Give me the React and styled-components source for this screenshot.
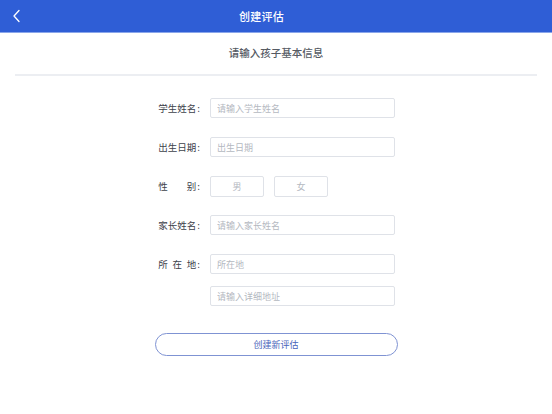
import styled, { createGlobalStyle } from "styled-components";

const GlobalStyle = createGlobalStyle`
  html, body {
    margin: 0;
    padding: 0;
    background: #ffffff;
  }
  body {
    font-family: "Noto Sans CJK SC", "Noto Sans", sans-serif;
  }
`;

const BackIcon = () => (
  <svg width="10" height="14" viewBox="0 0 10 14" fill="none">
    <path d="M7 1.5L2 7l5 5.5" stroke="#ffffff" strokeWidth="1.3" strokeLinecap="round" strokeLinejoin="round" />
  </svg>
);

const Field = ({ label, placeholder, spread }) => (
  <Row>
    <Label>
      <LabelText $spread={spread}>{label}</LabelText>:
    </Label>
    <Input placeholder={placeholder} />
  </Row>
);

export default function App() {
  return (
    <>
      <GlobalStyle />
      <Page>
        <Header>
          <BackButton>
            <BackIcon />
          </BackButton>
          <HeaderTitle>创建评估</HeaderTitle>
        </Header>

        <SubTitle>请输入孩子基本信息</SubTitle>
        <Divider />

        <Form>
          <Field label="学生姓名" placeholder="请输入学生姓名" />
          <Field label="出生日期" placeholder="出生日期" />
          <Row>
            <Label>
              <LabelText $spread>性别</LabelText>:
            </Label>
            <GenderGroup>
              <GenderOption>男</GenderOption>
              <GenderOption>女</GenderOption>
            </GenderGroup>
          </Row>
          <Field label="家长姓名" placeholder="请输入家长姓名" />
          <Field label="所在地" placeholder="所在地" spread />
          <DetailRow>
            <Label />
            <Input placeholder="请输入详细地址" />
          </DetailRow>
        </Form>

        <SubmitButton>创建新评估</SubmitButton>
      </Page>
    </>
  );
}

const Page = styled.div`
  width: 552px;
  height: 414px;
  display: flex;
  flex-direction: column;
  background: #ffffff;
`;

const Header = styled.div`
  height: 32px;
  background: #2f5ed6;
  border-bottom: 1px solid #8aa6ea;
  display: flex;
  align-items: center;
  position: relative;
`;

const BackButton = styled.div`
  position: absolute;
  left: 12px;
  top: 9px;
  width: 10px;
  height: 14px;
  display: flex;
`;

const HeaderTitle = styled.div`
  flex: 1;
  text-align: center;
  padding-right: 29px;
  color: #ffffff;
  font-size: 11px;
  font-weight: 500;
  letter-spacing: 0.3px;
`;

const SubTitle = styled.div`
  margin-top: 13px;
  text-align: center;
  font-size: 10.5px;
  font-weight: 500;
  color: #555a63;
  line-height: 14px;
`;

const Divider = styled.div`
  margin: 14px 15px 0;
  height: 2px;
  background: #eceef2;
`;

const Form = styled.div`
  margin-top: 22px;
  padding-left: 145px;
  display: flex;
  flex-direction: column;
  gap: 19px;
`;

const Row = styled.div`
  display: flex;
  align-items: center;
  gap: 10px;
  height: 20px;
`;

const DetailRow = styled(Row)`
  margin-top: -7px;
`;

const Label = styled.div`
  width: 55px;
  display: flex;
  justify-content: flex-end;
  font-size: 9.5px;
  color: #3d424b;
  white-space: nowrap;
`;

const LabelText = styled.span`
  display: inline-block;
  width: ${({ $spread }) => ($spread ? "38px" : "auto")};
  text-align-last: ${({ $spread }) => ($spread ? "justify" : "auto")};
  margin-right: 1px;
`;

const Input = styled.input`
  box-sizing: border-box;
  width: 185px;
  height: 20px;
  border: 1px solid #dfe2e8;
  border-radius: 2px;
  padding: 0 6px;
  font-family: inherit;
  font-size: 9px;
  color: #333;
  outline: none;

  &::placeholder {
    color: #b4b8bf;
  }
`;

const GenderGroup = styled.div`
  display: flex;
  gap: 10px;
`;

const GenderOption = styled.div`
  box-sizing: border-box;
  width: 54px;
  height: 21px;
  border: 1px solid #dfe2e8;
  border-radius: 2px;
  display: flex;
  align-items: center;
  justify-content: center;
  font-size: 9px;
  color: #b4b8bf;
`;

const SubmitButton = styled.button`
  box-sizing: border-box;
  align-self: center;
  margin-top: 27px;
  width: 243px;
  height: 23px;
  border: 1px solid #7f93d3;
  border-radius: 12px;
  background: #ffffff;
  font-family: inherit;
  font-size: 9px;
  color: #4864ba;
  cursor: pointer;
`;
